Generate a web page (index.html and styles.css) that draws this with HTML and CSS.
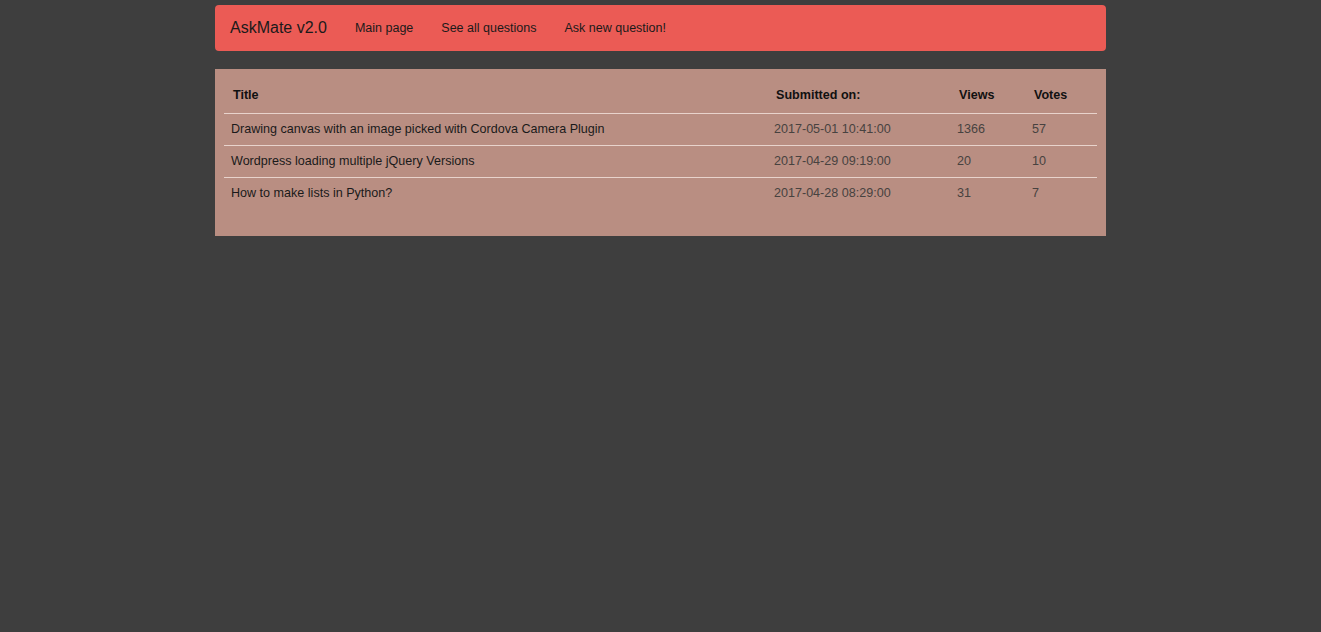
FILE: index.html
```html
<!DOCTYPE html>
<html>
<head>
<meta charset="utf-8">
<title>AskMate</title>
<link rel="stylesheet" href="styles.css">
</head>
<body>
<div class="container">
  <nav class="navbar">
    <span class="brand">AskMate v2.0</span>
    <a class="nav-link" href="#">Main page</a>
    <a class="nav-link" href="#">See all questions</a>
    <a class="nav-link" href="#">Ask new question!</a>
  </nav>
  <main class="panel">
    <table class="questions">
      <colgroup>
        <col class="c-title"><col class="c-date"><col class="c-views"><col class="c-votes">
      </colgroup>
      <thead>
        <tr><th>Title</th><th>Submitted on:</th><th>Views</th><th>Votes</th></tr>
      </thead>
      <tbody>
        <tr><td class="t">Drawing canvas with an image picked with Cordova Camera Plugin</td><td>2017-05-01 10:41:00</td><td>1366</td><td>57</td></tr>
        <tr><td class="t">Wordpress loading multiple jQuery Versions</td><td>2017-04-29 09:19:00</td><td>20</td><td>10</td></tr>
        <tr class="last"><td class="t">How to make lists in Python?</td><td>2017-04-28 08:29:00</td><td>31</td><td>7</td></tr>
      </tbody>
    </table>
  </main>
</div>
</body>
</html>
```
FILE: styles.css
```css
html, body {
  margin: 0;
  padding: 0;
  background: #3e3e3e;
  font-family: "Liberation Sans", Arial, sans-serif;
  font-size: 12.5px;
  color: #1a1a1a;
}
.container {
  width: 891px;
  margin: 0 auto;
  padding-top: 5px;
}
.navbar {
  height: 46px;
  background: #eb5b55;
  border-radius: 4px;
  display: flex;
  align-items: center;
  padding-left: 15px;
  gap: 28px;
  box-sizing: border-box;
}
.brand {
  font-size: 16px;
  color: #1a1a1a;
}
.nav-link {
  color: #1a1a1a;
  text-decoration: none;
  font-size: 12.5px;
}
.panel {
  margin-top: 18px;
  background: #b98e82;
  padding: 9px 9px 27px 9px;
}
.questions {
  width: 100%;
  border-collapse: collapse;
  table-layout: fixed;
  font-size: 12.57px;
}
.c-title { width: 543px; }
.c-date { width: 183px; }
.c-views { width: 75px; }
.c-votes { width: 72px; }
.questions th {
  text-align: left;
  font-weight: bold;
  color: #111;
  height: 35px;
  padding: 0 0 1px 9px;
  box-sizing: border-box;
  border-bottom: 1px solid #e8d3cc;
}
.questions td {
  height: 32px;
  padding: 0 0 1px 7px;
  box-sizing: border-box;
  color: #474240;
  border-bottom: 1px solid #e8d3cc;
  white-space: nowrap;
}
.questions td.t {
  color: #1a1a1a;
}
.questions tr.last td {
  border-bottom: none;
}
```
